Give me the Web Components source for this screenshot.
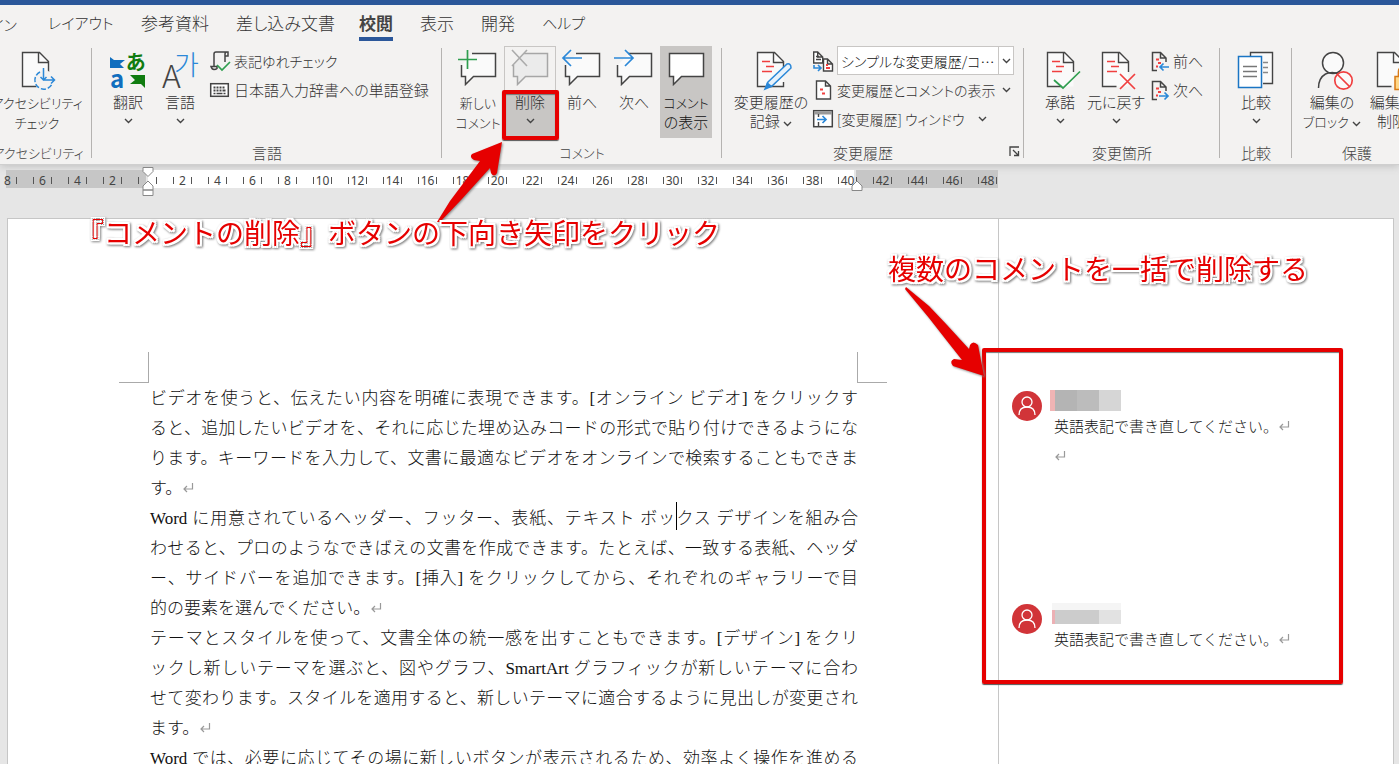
<!DOCTYPE html>
<html lang="ja">
<head>
<meta charset="utf-8">
<title>Word - 校閲</title>
<style>
html,body{margin:0;height:100%;background:#e6e6e6;overflow:hidden}
body{font-family:"Noto Sans CJK JP","Noto Sans",sans-serif;color:#444}
</style>
</head>
<body>
<word-app></word-app>
<script>
const define=(name,html,setup)=>{
  const tpl=document.createElement('template');
  tpl.innerHTML=html;
  customElements.define(name,class extends HTMLElement{
    constructor(){super();this.attachShadow({mode:'open'}).append(tpl.content.cloneNode(true));}
    connectedCallback(){if(setup&&!this.ready){this.ready=true;setup(this,this.shadowRoot);}}
  });
};

/* ---------- icons ---------- */
const D='#444',B='#2b88d8',R='#f04040',G='#2f9e4f';
const doc=x=>`<path d="M${x} 2.5h17l9 9V36.5h-26z" fill="#fafafa" stroke="none"/><path d="M${x+14} 36.5H${x}V2.5h17l9 9V22M${x+16} 2.5v10h10" fill="none" stroke="${D}" stroke-width="1.4"/>`;
const redLines=x=>`<path d="M${x} 11.5h8M${x+4} 16.5h8M${x} 21.5h10" stroke="${R}" stroke-width="1.6"/>`;
const bubbleCut=(c,f)=>`<path d="M2 15l10-11h23v22H14l-8 8v-8H2z" fill="${f}" stroke="none"/><path d="M12 3.5h23.500v23h-22l-8 8v-8h-4V15" fill="none" stroke="${c}" stroke-width="1.5"/>`;
const smallDoc=(x,y,w,h)=>`<path d="M${x} ${y}h${w-5}l5 5v${h-5}h-${w}zM${x+w-5} ${y}v5h5" fill="#fff" stroke="${D}" stroke-width="1.4"/>`;
const cutDoc=`<path d="M8 19.500H3.500V1.500h8l5.500 5.500V11M11.500 1.500V7H17" fill="none" stroke="${D}" stroke-width="1.5"/><path d="M7 8.500h3M9 12h3M7 15.500h2" stroke="${R}" stroke-width="2"/>`;
const ICONS={
 access:[36,40,doc(3.5)+`<circle cx="25" cy="30" r="10" fill="#f3f2f1" stroke="none"/><path d="M21 22a9 9 0 1 0 12 12" fill="none" stroke="${B}" stroke-width="1.500" stroke-dasharray="5 2"/><path d="M24.500 18v12H35M21.500 27l3 3 3-3M32 26.500l3.500 3.500-3.500 3.500" fill="none" stroke="${B}" stroke-width="1.500"/>`],
 translate:[36,40,`<path d="M0 7l4 3h11l-5 4 4 4H0z" fill="#106ebe"/><path d="M20 25h15v13l-4-4H20l5-4z" fill="#107c10"/><text x="16" y="20" font-size="20" font-weight="700" fill="#107c10">あ</text><text x="0" y="38" font-size="24" font-weight="700" font-family="Noto Sans" fill="#106ebe">a</text>`],
 language:[36,40,`<text x="0" y="38" font-size="32" font-weight="300" font-family="Open Sans" fill="#444">A</text><text x="12" y="25" font-size="27" font-weight="300" font-family="Noto Sans CJK KR" fill="#2b88d8">가</text>`],
 newComment:[36,40,bubbleCut(D,'#fafafa')+`<path d="M-2 9.500h19M7.500 0v19" stroke="${G}" stroke-width="1.700"/>`],
 deleteComment:[36,40,bubbleCut('#a6a6a6','#ebebeb')+`<path d="M0 0l15 16M15 0L0 16" stroke="#ababab" stroke-width="1.600"/>`],
 prevComment:[36,40,bubbleCut(D,'#fafafa')+`<path d="M18 8H0M7 0L-1 8l8 8" fill="none" stroke="${B}" stroke-width="1.700"/>`],
 nextComment:[36,40,bubbleCut(D,'#fafafa')+`<path d="M-2 8h18M9 0l8 8-8 8" fill="none" stroke="${B}" stroke-width="1.700"/>`],
 showComments:[36,40,`<path d="M1.500 3.500h34v23h-22l-8 8v-8h-4z" fill="#fff" stroke="${D}" stroke-width="1.500"/>`],
 track:[36,40,doc(4.5)+`<path d="M30.500 32v4.500h-14" fill="none" stroke="${D}" stroke-width="1.400"/>`+redLines(9)+`<path d="M15 32L34 14q4-1 4 4L19 36l-7 3z" fill="#e8f2fb" stroke="${B}" stroke-width="1.500"/><path d="M12 39l2-7 5 4z" fill="${B}"/>`],
 accept:[36,40,doc(5.5)+redLines(10)+`<path d="M12 30l9 8L38 21.500" fill="none" stroke="${G}" stroke-width="1.700"/>`],
 reject:[36,40,doc(4.5)+redLines(9)+`<path d="M22 24l15 15M37 24L22 39" stroke="${R}" stroke-width="1.700"/>`],
 compare:[36,40,`<path d="M12.500 6V2.500h22v31H25" fill="#fafafa" stroke="${D}" stroke-width="1.400"/><path d="M25 12.500h5M25 17.500h5M25 22.500h5" stroke="#888" stroke-width="1.300"/><path d="M.5 6.500h23v31H.5z" fill="#fff" stroke="#1a75c4" stroke-width="1.500"/><path d="M5 16.500h14M5 21.500h14M5 26.500h14" stroke="#777" stroke-width="1.300"/>`],
 block:[36,40,`<circle cx="19" cy="13" r="10.500" fill="#fafafa" stroke="${D}" stroke-width="1.500"/><path d="M4.500 38q0-10 7-14 7-3 13 0" fill="none" stroke="${D}" stroke-width="1.500"/><circle cx="29.500" cy="30.500" r="8.700" fill="#fafafa" stroke="${R}" stroke-width="1.700"/><path d="M23.500 24.500l12 12" stroke="${R}" stroke-width="1.700"/>`],
 restrict:[36,40,doc(3.5)+`<path d="M24.500 26v-4q0-5 5-5t5 5v4" fill="none" stroke="#d87a16" stroke-width="1.700"/><path d="M21 26.500h17v13H21z" fill="#ffd88a" stroke="#d87a16" stroke-width="1.500"/>`],
 spell:[20,20,`<path d="M4 15V3q0-2 2-2h12v4h-3V3q0-2 2-2M15 5v6M1 15.500h6v2q-1 1-3 1t-3-3z" fill="none" stroke="${D}" stroke-width="1.500"/><path d="M7 14l5 5 8-8" fill="none" stroke="${G}" stroke-width="1.700"/>`],
 keyboard:[20,20,`<rect x=".7" y="3.700" width="17.600" height="12.600" fill="#fff" stroke="${D}" stroke-width="1.500"/><path d="M3.500 7.500h2m1 0h2m1 0h2m1 0h2M3.500 10.500h2m1 0h2m1 0h2m1 0h3" stroke="${D}" stroke-width="2"/><path d="M3.500 13.500h2m1 0h6m1 0h2" stroke="${D}" stroke-width="1.500"/>`],
 markup:[20,20,smallDoc(.7,1,9,11)+smallDoc(10.500,8,9,12)+`<path d="M3 5.500h3M3 8.500h5" stroke="${D}" stroke-width="1.300"/><path d="M13 14h2M13 17h4" stroke="${R}" stroke-width="2"/><path d="M1 14v3h7M5 14l3 3-3 3" fill="none" stroke="${B}" stroke-width="1.600"/>`],
 showMarkup:[20,20,smallDoc(3.500,1,14,18)+`<path d="M7 9.500h3M9 13.500h3" stroke="${R}" stroke-width="2"/>`],
 pane:[20,20,`<rect x=".7" y="1.700" width="18.600" height="16" fill="#fff" stroke="${D}" stroke-width="1.500"/><path d="M1 4h18" stroke="#999" stroke-width="3"/><path d="M5.500 5v3M5.500 13v4" stroke="${D}" stroke-width="1.400"/><path d="M4 10.500h9M9.500 7l3.500 3.500L9.500 14" fill="none" stroke="${B}" stroke-width="1.700"/>`],
 prevChange:[20,20,cutDoc+`<path d="M20 16h-9M14.500 12.500L11 16l3.500 3.500" fill="none" stroke="${B}" stroke-width="1.700"/>`],
 nextChange:[20,20,cutDoc+`<path d="M10 16h9M15.500 12.500L19 16l-3.500 3.500" fill="none" stroke="${B}" stroke-width="1.700"/>`],
 chevron:[9,6,`<path d="M1 1l3.500 3.500L8 1" fill="none" stroke="#444" stroke-width="1.400"/>`],
 launcher:[11,11,`<path d="M1 10V1h9M4 4l5 5M9.500 5v4.500H5" fill="none" stroke="#444" stroke-width="1.300"/>`],
 enter:[12,12,`<path d="M10.500 1v6H2M5 4L2 7l3 3" fill="none" stroke="#999" stroke-width="1.200"/>`],
 person:[30,30,`<circle cx="15" cy="15" r="15" fill="#d13438"/><circle cx="15" cy="11" r="5" fill="none" stroke="#fff" stroke-width="1.300"/><path d="M7 24q0-8 8-8t8 8" fill="none" stroke="#fff" stroke-width="1.300"/>`],
 firstIndent:[12,29,`<path d="M1 .5h10v4L6 9.500 1 4.500z" fill="#fff" stroke="#888"/><path d="M6 14l5 5v4H1v-4zM1 23h10v5.500H1z" fill="#fff" stroke="#888"/>`],
 rightIndent:[12,11,`<path d="M6 1l5 5v4.500H1V6z" fill="#fff" stroke="#888"/>`]
};
define('word-icon',`<style>:host{display:inline-block;flex:none}svg{display:block;overflow:visible}text{font-family:"Noto Sans CJK JP",sans-serif}</style>`,(el,root)=>{
  const [w,h,body]=ICONS[el.getAttribute('name')];
  root.innerHTML+=`<svg width="${w}" height="${h}" viewBox="0 0 ${w} ${h}" aria-hidden="true">${body}</svg>`;
});

/* ---------- ribbon ---------- */
define('ribbon-tab',`<style>
:host{display:block;flex:none}
button{display:block;font:inherit;font-size:17px;line-height:24px;font-feature-settings:"palt";color:#333;background:none;border:0;border-bottom:4px solid transparent;padding:0 0 2px;white-space:nowrap}
:host([kana]) button{font-size:15px}
:host([active]) button{font-weight:700;color:#444;border-color:#2b579a}
</style><button type="button" role="tab"><slot></slot></button>`);

define('ribbon-group',`<style>
:host{display:flex;flex-direction:column;flex:none;box-sizing:border-box;position:relative;height:119px}
:host::after{content:"";position:absolute;right:0;top:3px;height:110px;width:1px;background:#b5b3b1}
.body{display:flex;height:92px;padding:1px 0 0 10px}
footer{display:flex;justify-content:center;font-size:15px;line-height:22px;padding-top:4px;font-feature-settings:"palt";white-space:nowrap}
:host([kana]) footer{font-size:13px}
:host([launcher]) footer{padding-right:20px}
.launch{position:absolute;right:4px;bottom:4px;padding:0;border:0;background:none}
</style><div class="body"><slot></slot></div><footer></footer>`,(el,root)=>{
  root.querySelector('footer').textContent=el.getAttribute('label');
  if(el.hasAttribute('launcher')) root.querySelector('footer').insertAdjacentHTML('afterend','<button class="launch" type="button" aria-label="変更履歴オプション"><word-icon name="launcher"></word-icon></button>');
});

define('ribbon-button',`<style>
:host{display:block;flex:none;width:52px}
button{display:flex;flex-direction:column;align-items:center;gap:2px;width:100%;height:92px;box-sizing:border-box;padding:4px 0 0;margin:0;border:0;background:none;font:inherit;font-size:15px;line-height:19px;font-feature-settings:"palt";color:#333;white-space:nowrap}
.icon{height:40px}
::slotted(small){font-size:13px}
:host([pressed]) button{background:#c8c6c4;color:#111}
:host([split]) button{background:linear-gradient(#f3f2f1 46px,#c8c6c4 46px);outline:1px solid #c8c6c4;outline-offset:-1px}
.more{display:flex;height:19px;align-items:center;justify-content:center;margin-top:-2px}
</style><button type="button"><span class="icon"></span><span><slot></slot></span></button>`,(el,root)=>{
  root.querySelector('.icon').innerHTML=`<word-icon name="${el.getAttribute('icon')}"></word-icon>`;
  if(el.hasAttribute('menu')) root.querySelector('button').insertAdjacentHTML('beforeend','<span class="more"><word-icon name="chevron"></word-icon></span>');
});

define('ribbon-command',`<style>
:host{display:flex}
button{display:flex;align-items:center;gap:4px;height:29px;padding:0;border:0;background:none;font:inherit;font-size:15px;font-feature-settings:"palt";color:#333;white-space:nowrap}
.icon{display:flex}
.more{padding-left:2px}
:host([spaced]) .more{padding-left:10px}
:host([kana]) button{font-size:14px}
</style><button type="button"><span class="icon"></span><slot></slot></button>`,(el,root)=>{
  root.querySelector('.icon').innerHTML=`<word-icon name="${el.getAttribute('icon')}"></word-icon>`;
  if(el.hasAttribute('menu')) root.querySelector('button').insertAdjacentHTML('beforeend','<word-icon class="more" name="chevron"></word-icon>');
});

define('ribbon-select',`<style>
:host{display:flex;align-items:center;gap:4px;height:29px}
.field{display:flex;position:relative;width:177px;height:29px}
select{appearance:none;width:100%;height:29px;box-sizing:border-box;border:1px solid #c8c6c4;border-radius:0;background:#fff;font:inherit;font-size:14px;font-feature-settings:"palt";color:#111;padding:0 16px 0 3px}
.arrow{position:absolute;right:0;top:0;width:16px;height:29px;box-sizing:border-box;border-left:1px solid #c8c6c4;display:flex;align-items:center;justify-content:center;pointer-events:none}
</style><word-icon name="markup"></word-icon><div class="field"><select aria-label="変更内容の表示"><option>シンプルな変更履歴/コ…</option></select><span class="arrow"><word-icon name="chevron"></word-icon></span></div>`);

define('word-ribbon',`<style>
:host{display:block;position:relative;background:#f3f2f1;box-shadow:0 1px 0 #cfcfcf,0 2px 8px #bcbcbc;font-weight:300}
.title{height:5px;background:#2b579a}
nav{display:flex;height:40px;box-sizing:border-box;padding-top:6px;overflow:hidden}
nav ribbon-tab{margin-right:27px}
nav .first{width:17px;display:flex;justify-content:flex-end;margin-right:31px}
nav .layout{width:66px}
nav .merge{width:96px}
.groups{display:flex;margin-left:-16px;overflow:hidden}
.a{width:108px}.b{width:350px}.c{width:280px}.d{width:302px}.e{width:196px}.f{width:72px}.g{width:130px}
.rows{display:flex;flex-direction:column}
.b .rows{padding-left:4px}.d .rows,.e .rows{padding-left:3px}
.a ribbon-button{width:86px}
.wide{width:78px}.mid{width:60px}
</style>
<div class="title"></div>
<nav role="tablist">
<ribbon-tab class="first" kana>デザイン</ribbon-tab><ribbon-tab class="layout" kana>レイアウト</ribbon-tab><ribbon-tab>参考資料</ribbon-tab><ribbon-tab class="merge">差し込み文書</ribbon-tab><ribbon-tab active>校閲</ribbon-tab><ribbon-tab>表示</ribbon-tab><ribbon-tab>開発</ribbon-tab><ribbon-tab kana>ヘルプ</ribbon-tab>
</nav>
<div class="groups">
<ribbon-group class="a" label="アクセシビリティ" kana><ribbon-button icon="access"><small>アクセシビリティ</small><br><small>チェック</small></ribbon-button></ribbon-group>
<ribbon-group class="b" label="言語"><ribbon-button icon="translate" menu>翻訳</ribbon-button><ribbon-button icon="language" menu>言語</ribbon-button><div class="rows"><ribbon-command icon="spell" kana>表記ゆれチェック</ribbon-command><ribbon-command icon="keyboard">日本語入力辞書への単語登録</ribbon-command></div></ribbon-group>
<ribbon-group class="c" label="コメント" kana><ribbon-button icon="newComment"><small>新しい</small><br><small>コメント</small></ribbon-button><ribbon-button icon="deleteComment" menu split>削除</ribbon-button><ribbon-button icon="prevComment">前へ</ribbon-button><ribbon-button icon="nextComment">次へ</ribbon-button><ribbon-button icon="showComments" pressed><small>コメント</small><br>の表示</ribbon-button></ribbon-group>
<ribbon-group class="d" label="変更履歴" launcher><ribbon-button class="wide" icon="track">変更履歴の<br>記録 <word-icon name="chevron"></word-icon></ribbon-button><div class="rows"><ribbon-select></ribbon-select><ribbon-command icon="showMarkup" menu kana>変更履歴とコメントの表示</ribbon-command><ribbon-command icon="pane" menu kana spaced>[変更履歴] ウィンドウ</ribbon-command></div></ribbon-group>
<ribbon-group class="e" label="変更箇所"><ribbon-button icon="accept" menu>承諾</ribbon-button><ribbon-button class="mid" icon="reject" menu>元に戻す</ribbon-button><div class="rows"><ribbon-command icon="prevChange">前へ</ribbon-command><ribbon-command icon="nextChange">次へ</ribbon-command></div></ribbon-group>
<ribbon-group class="f" label="比較"><ribbon-button icon="compare" menu>比較</ribbon-button></ribbon-group>
<ribbon-group class="g" label="保護"><ribbon-button class="mid" icon="block">編集の<br><small>ブロック</small> <word-icon name="chevron"></word-icon></ribbon-button><ribbon-button class="mid" icon="restrict">編集の<br>制限</ribbon-button></ribbon-group>
</div>`);

/* ---------- ruler ---------- */
define('word-ruler',`<style>
:host{display:flex;position:relative;height:18px;margin:6px 0 0 6px;width:992px;font-family:"Noto Sans",sans-serif;font-size:12px;line-height:16px;
background:linear-gradient(90deg,#c6c6c6 140px,#e6e6e6 140px,#e6e6e6 142px,#fff 142px,#fff 848px,#e6e6e6 848px,#e6e6e6 850px,#c6c6c6 850px)}
.cells{display:flex;margin-left:-16px}
.cell{display:flex;align-items:center;width:35px;flex:none;box-sizing:border-box;padding:3px 8px 0}
.cell::before,.cell::after{content:"";width:1px;height:7px;background:#555;flex:none}
.cell.start::before{background:none}
.cell span{width:17px;display:flex;justify-content:center}
.left{position:absolute;left:136px;top:-3px}
.right{position:absolute;left:845px;top:10px}
</style><div class="cells"></div><word-icon class="left" name="firstIndent"></word-icon><word-icon class="right" name="rightIndent"></word-icon>`,(el,root)=>{
  const cells=root.querySelector('.cells');
  for(let n=-8;n<=48;n+=2) cells.insertAdjacentHTML('beforeend',`<div class="cell${n===-8?' start':''}"><span>${n?Math.abs(n):''}</span></div>`);
});

/* ---------- document ---------- */
define('doc-paragraph',`<style>
:host{display:block;font-family:"Liberation Serif","Noto Sans CJK JP",serif;font-size:17px;font-weight:300;line-height:30px;color:#111}
::slotted(span){display:block;text-align:justify;text-align-last:justify}
::slotted(span.end){text-align-last:start}
</style><slot></slot>`);

define('comment-card',`<style>
:host{display:grid;grid-template-columns:30px 1fr;column-gap:8px;color:#111}
.who{padding-top:1px;height:20px}
.name{display:flex;height:21px;width:71px}
.name i{flex:1;background:#b4b4b4}.name i:nth-child(3){background:#bcbcbc}.name i:nth-child(4){background:#d6d6d6}
.name i:first-child{flex:none;width:5px;background:#f0b4b4}
:host([faint]) .name{border-top:7px solid #f5f5f5;box-sizing:border-box;margin-left:2px;width:69px}
:host([faint]) .name i{background:#ccc}:host([faint]) .name i:first-child{width:3px;background:#ecb0b4}:host([faint]) .name i:nth-child(4){background:#e2e2e2}
.text{grid-column:2;padding-left:4px;font-size:15px;line-height:30px;font-weight:300}
</style><word-icon class="who" name="person"></word-icon><div class="name"><i></i><i></i><i></i><i></i></div><div class="text"><slot></slot></div>`);

define('word-page',`<style>
:host{display:flex;margin:30px 5px 0 7px;background:#fff;border:1px solid #c6c6c6;border-bottom:0;height:760px}
main{flex:1;min-width:0;padding:133px 111px 0}
.marks{display:flex;justify-content:space-between;height:32px}
.marks i{width:30px;height:31px;box-sizing:border-box;border:0 solid #aaa;border-bottom-width:1px}
.marks i:first-child{border-right-width:1px}.marks i:last-child{border-left-width:1px}
article{padding:0 29px 0 31px}
.caret{display:inline-block;position:relative;width:0;height:1px}
.caret::after{content:"";position:absolute;left:0;bottom:-6px;width:1px;height:28px;background:#000}
aside{position:relative;flex:none;width:395px;box-sizing:border-box;border-left:1px solid #c6c6c6;padding:171px 20px 0 13px;display:flex;flex-direction:column;gap:132px}
.frame{position:absolute;left:-17px;top:129px;width:361px;height:336px;box-sizing:border-box;border:4px solid #e60000;border-radius:2px;box-shadow:0 1px 1px #555,inset 0 1px 1px #777}
.note{position:absolute;left:-111px;top:29px}
.arrow{position:absolute;left:-100px;top:60px;overflow:visible}
</style>
<main><div class="marks"><i></i><i></i></div><article>
<doc-paragraph><span>ビデオを使うと、伝えたい内容を明確に表現できます。[オンライン ビデオ] をクリックす</span><span>ると、追加したいビデオを、それに応じた埋め込みコードの形式で貼り付けできるようにな</span><span>ります。キーワードを入力して、文書に最適なビデオをオンラインで検索することもできま</span><span class="end">す。<word-icon name="enter"></word-icon></span></doc-paragraph>
<doc-paragraph><span>Word に用意されているヘッダー、フッター、表紙、テキスト ボッ<b class="caret"></b>クス デザインを組み合</span><span>わせると、プロのようなできばえの文書を作成できます。たとえば、一致する表紙、ヘッダ</span><span>ー、サイドバーを追加できます。[挿入] をクリックしてから、それぞれのギャラリーで目</span><span class="end">的の要素を選んでください。<word-icon name="enter"></word-icon></span></doc-paragraph>
<doc-paragraph><span>テーマとスタイルを使って、文書全体の統一感を出すこともできます。[デザイン] をクリ</span><span>ックし新しいテーマを選ぶと、図やグラフ、SmartArt グラフィックが新しいテーマに合わ</span><span>せて変わります。スタイルを適用すると、新しいテーマに適合するように見出しが変更され</span><span class="end">ます。<word-icon name="enter"></word-icon></span></doc-paragraph>
<doc-paragraph><span>Word では、必要に応じてその場に新しいボタンが表示されるため、効率よく操作を進める</span></doc-paragraph>
</article></main>
<aside>
<comment-card>英語表記で書き直してください。<word-icon name="enter"></word-icon><br><word-icon name="enter"></word-icon></comment-card>
<comment-card faint>英語表記で書き直してください。<word-icon name="enter"></word-icon></comment-card>
<div class="frame"></div>
<svg class="arrow" width="90" height="100" viewBox="900 279 90 100" aria-hidden="true"><path d="M907 287L930 306L948 325L970 349L971 345Q974 340 979 345L985 376L954 366Q950 361 955 359L963 360L948 341L930 318L906 289Z" fill="#e60000" style="filter:drop-shadow(1px 1px 1px #888)"/></svg>
<callout-text class="note">複数のコメントを一括で削除する</callout-text>
</aside>`);

/* ---------- callouts ---------- */
define('callout-text',`<style>
:host{display:block;font-size:28px;line-height:40px;font-weight:400;color:#e60000;white-space:nowrap;
text-shadow:2px 0 #fff,-2px 0 #fff,0 2px #fff,0 -2px #fff,2px 2px #fff,-2px 2px #fff,2px -2px #fff,-2px -2px #fff;filter:drop-shadow(1px 1px 1px #777)}
</style><slot></slot>`);

define('word-app',`<style>
:host{display:block;position:relative;height:100vh;overflow:hidden}
.frame{position:absolute;left:502px;top:90px;width:57px;height:50px;box-sizing:border-box;border:4px solid #e60000;border-radius:2px;box-shadow:0 1px 1px #555,inset 0 1px 1px #777}
.arrow{position:absolute;left:430px;top:140px;overflow:visible}
.note{position:absolute;left:76px;top:212px}
</style>
<word-ribbon></word-ribbon><word-ruler></word-ruler><word-page></word-page>
<div class="frame"></div>
<svg class="arrow" width="80" height="90" viewBox="430 140 80 90" aria-hidden="true"><path d="M437 222L450 201L480 161L474 160Q469 157 472 154L502 142L497 173Q494 178 491 173L490 168L461 200L440 222Z" fill="#e60000" style="filter:drop-shadow(1px 1px 1px #888)"/></svg>
<callout-text class="note">『コメントの削除』ボタンの下向き矢印をクリック</callout-text>`);
</script>
</body>
</html>
